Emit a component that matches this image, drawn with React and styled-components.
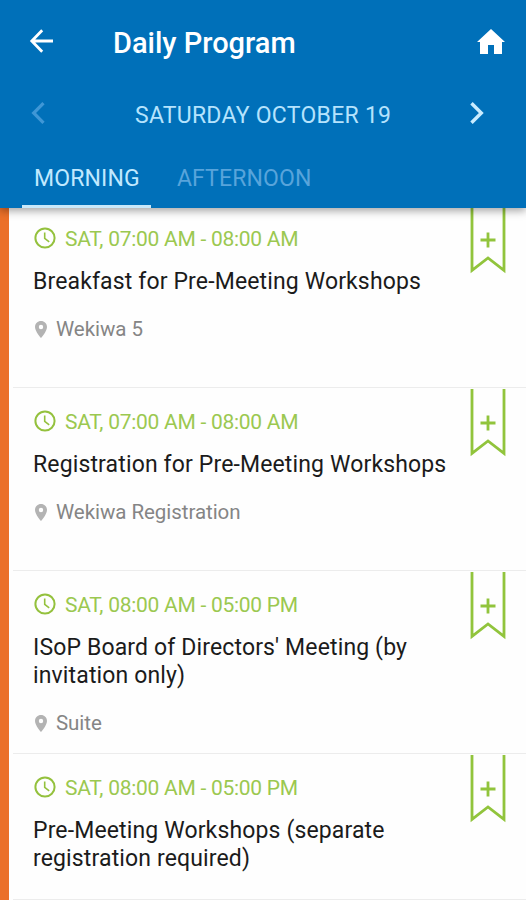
import React from "react"
import styled, { createGlobalStyle } from "styled-components"

const sessions = [
    { time: "SAT, 07:00 AM - 08:00 AM", title: "Breakfast for Pre-Meeting Workshops", place: "Wekiwa 5" },
    { time: "SAT, 07:00 AM - 08:00 AM", title: "Registration for Pre-Meeting Workshops", place: "Wekiwa Registration" },
    { time: "SAT, 08:00 AM - 05:00 PM", title: "ISoP Board of Directors' Meeting (by invitation only)", place: "Suite" },
    { time: "SAT, 08:00 AM - 05:00 PM", title: "Pre-Meeting Workshops (separate registration required)" },
]

export default function App() {
    return (
        <Screen>
            <GlobalStyle />
            <Header>
                <TitleBar>
                    <IconButton aria-label="Back">
                        <svg width="24" height="24" viewBox="0 0 24 24" fill="none" stroke="#fff" strokeWidth="2.8">
                            <path d="M24 12H3M13.2 1.2L2.8 12L13.2 22.8" />
                        </svg>
                    </IconButton>
                    <Heading>Daily Program</Heading>
                    <IconButton aria-label="Home">
                        <svg width="28" height="25" viewBox="0 0 28 25" fill="#fff">
                            <path d="M14 0L0 13H3V25H11V16H17V25H25V13H28Z" />
                        </svg>
                    </IconButton>
                </TitleBar>
                <DateBar>
                    <IconButton aria-label="Previous day" disabled>
                        <svg width="14" height="22" viewBox="0 0 14 22" fill="none" stroke="#3f97d6" strokeWidth="3.2">
                            <path d="M12.5 1.2L2.7 11L12.5 20.8" />
                        </svg>
                    </IconButton>
                    <DateLabel>SATURDAY OCTOBER 19</DateLabel>
                    <IconButton aria-label="Next day">
                        <svg width="14" height="22" viewBox="0 0 14 22" fill="none" stroke="#c9ecff" strokeWidth="3.4">
                            <path d="M1.5 1.2L11.3 11L1.5 20.8" />
                        </svg>
                    </IconButton>
                </DateBar>
                <Tabs>
                    <Tab $active>MORNING</Tab>
                    <Tab>AFTERNOON</Tab>
                </Tabs>
            </Header>
            <List>
                {sessions.map((session) => (
                    <Session key={session.title} {...session} />
                ))}
            </List>
        </Screen>
    )
}

function Session({ time, title, place }) {
    return (
        <Row $short={!place}>
            <Time>
                <svg width="22" height="22" viewBox="0 0 22 22" fill="none" stroke="#94c13d">
                    <circle cx="11" cy="11" r="9.6" strokeWidth="2" />
                    <path d="M10.7 5.5V11.3L15.2 14.8" strokeWidth="1.6" />
                </svg>
                <span>{time}</span>
            </Time>
            <Title>{title}</Title>
            {place && (
                <Place>
                    <svg width="12" height="17" viewBox="0 0 12 17" fill="#b3b3b3">
                        <path fillRule="evenodd" d="M6 0C2.7 0 0 2.6 0 5.9C0 10.2 6 17 6 17S12 10.2 12 5.9C12 2.6 9.3 0 6 0ZM6 3.8A2.2 2.2 0 1 1 6 8.2A2.2 2.2 0 1 1 6 3.8Z" />
                    </svg>
                    <span>{place}</span>
                </Place>
            )}
            <Ribbon aria-label="Add to agenda">
                <svg width="36" height="69" viewBox="0 0 36 69" fill="none" stroke="#91c43c">
                    <path d="M2 1V65.3L18 53L34 65.3V1" strokeWidth="2.8" />
                    <path d="M18 27.5V42.5M10.5 35H25.5" strokeWidth="2.8" />
                </svg>
            </Ribbon>
        </Row>
    )
}

const GlobalStyle = createGlobalStyle`
    body{
        margin: 0;
        background: #fefefe;
        font-family: Roboto, "Liberation Sans", sans-serif;
    }
`

const Screen = styled.div`
    width: 526px;
    height: 900px;
    overflow: hidden;
    display: flex;
    flex-direction: column;
`

const Header = styled.header`
    position: relative;
    z-index: 1;
    flex: none;
    box-sizing: border-box;
    height: 208px;
    display: flex;
    flex-direction: column;
    background: #0070b9;
    box-shadow: 0 3px 8px rgba(0, 0, 0, 0.35);
`

const IconButton = styled.button`
    display: flex;
    padding: 0;
    border: 0;
    background: none;
`

const TitleBar = styled.div`
    display: flex;
    align-items: center;
    height: 82px;
    padding: 0 21px 0 29px;
`

const Heading = styled.h1`
    flex: 1;
    margin: 3px 0 0 60px;
    font-weight: 500;
    font-size: 29px;
    line-height: 34px;
    color: #fff;
`

const DateBar = styled.div`
    display: flex;
    align-items: center;
    height: 62px;
    padding: 0 42px 0 31px;
`

const DateLabel = styled.div`
    flex: 1;
    padding: 5px 0 0 90px;
    font-size: 23px;
    line-height: 28px;
    letter-spacing: 0.27px;
    color: #b5e3fd;
`

const Tabs = styled.nav`
    display: flex;
    flex: 1;
    padding-left: 22px;
    gap: 14px;
`

const Tab = styled.div`
    box-sizing: border-box;
    padding: 21px 11px 0 12px;
    font-size: 23px;
    line-height: 28px;
    letter-spacing: 0.15px;
    color: ${({ $active }) => ($active ? "#c0e9ff" : "#58a4db")};
    border-bottom: 3px solid ${({ $active }) => ($active ? "#c8e8fa" : "transparent")};
`

/* starts slightly under the header, as a scrolled list does */
const List = styled.main`
    margin-top: -3px;
`

const Row = styled.article`
    position: relative;
    box-sizing: border-box;
    height: ${({ $short }) => ($short ? 146 : 183)}px;
    padding: 20px 70px 0 33px;
    background:
        linear-gradient(#eb7029, #eb7029) left / 9px 100% no-repeat,
        linear-gradient(#ececec, #ececec) 13px 100% / 100% 1px no-repeat;
`

const Time = styled.div`
    display: flex;
    align-items: center;
    gap: 9px;
    padding-left: 1px;
    font-size: 21px;
    line-height: 28px;
    letter-spacing: -0.27px;
    color: #9bc850;

    svg{
        margin-top: -3px;
    }
`

const Title = styled.h2`
    margin: 15px 0 19px;
    font-weight: 400;
    font-size: 23px;
    line-height: 28px;
    letter-spacing: 0.14px;
    color: #1b1b1b;
`

const Place = styled.div`
    display: flex;
    align-items: center;
    gap: 9px;
    padding-left: 2px;
    font-size: 20.5px;
    line-height: 28px;
    letter-spacing: -0.05px;
    color: #858585;
`

const Ribbon = styled.button`
    position: absolute;
    top: 0;
    right: 20px;
    display: flex;
    padding: 0;
    border: 0;
    background: none;
`
